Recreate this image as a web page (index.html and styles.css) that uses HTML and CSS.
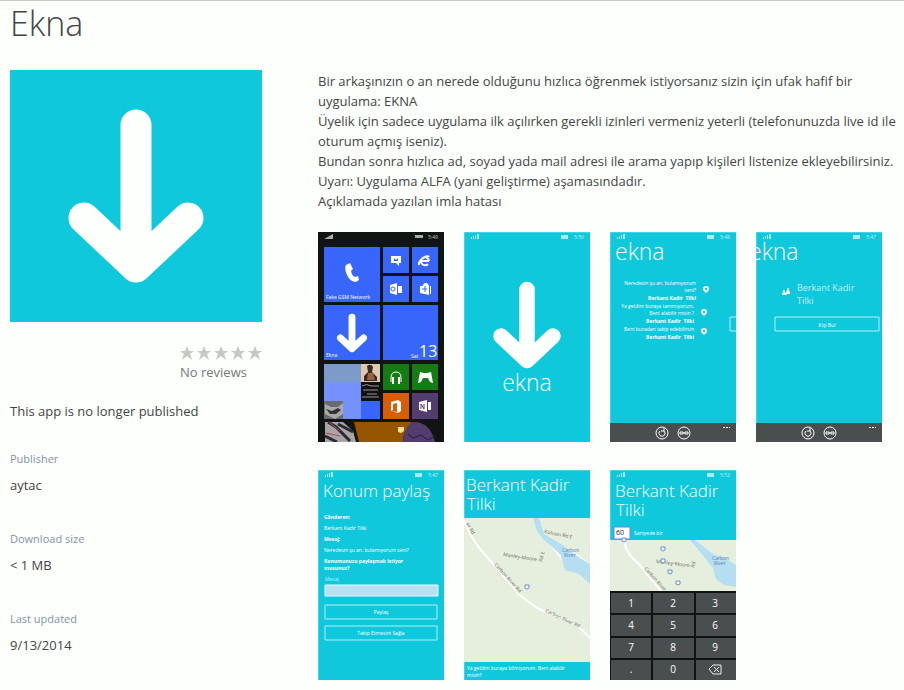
FILE: index.html
```html
<!DOCTYPE html>
<html lang="en">
<head>
<meta charset="utf-8">
<title>Ekna</title>
<meta name="viewport" content="width=device-width, initial-scale=1">
<link rel="stylesheet" href="styles.css">
</head>
<body>
<svg class="defs" aria-hidden="true">
  <symbol id="arrow" viewBox="0 0 252 252">
    <path d="M126 55V197M74 148L126 197L178 148" fill="none" stroke="#fdfffd" stroke-width="31" stroke-linecap="round" stroke-linejoin="round"/>
  </symbol>
  <symbol id="status" viewBox="0 0 126 8">
    <path d="M7 7V5h1V7zM9 7V4h1V7zM11 7V3h1V7zM13 7V2h2V7zM97 3h7v4h-7z" fill="#fff" opacity=".65"/>
  </symbol>
  <symbol id="star" viewBox="0 0 14 14">
    <path d="M7 0l2 5h5l-4 3 2 6-5-4-5 4 2-6-4-3h5z"/>
  </symbol>
  <symbol id="appbar" viewBox="0 0 126 19">
    <path d="M0 0h126v19H0z" fill="#4a4e4e"/>
    <g fill="none" stroke="#fff">
      <circle cx="52" cy="10" r="6"/><circle cx="74" cy="10" r="6"/>
      <path d="M50 8a3 3 0 1 0 4 0M54 5v3h-3"/>
      <path d="M70 9h3v2h-3zM75 9h3v2h-3zM73 10h2"/>
    </g>
    <path d="M113 4h2v1h-2zM116 4h2v1h-2zM119 4h1v1h-1z" fill="#fff"/>
  </symbol>
  <symbol id="pin" viewBox="0 0 8 8">
    <path d="M1 3a3 3 0 0 1 6 0q0 2-3 4Q1 5 1 3z" fill="#fff"/><path d="M3 2h2v2H3z" fill="#10c8dc"/>
  </symbol>
  <symbol id="marker" viewBox="0 0 6 6">
    <path d="M1 1h4v3L3 5 1 4z" fill="#fff" stroke="#5f92d2"/>
  </symbol>
</svg>

<header class="title"><h1>Ekna</h1></header>

<main class="page">
  <aside class="side">
    <svg class="logo" viewBox="0 0 252 252" role="img" aria-label="Ekna"><path d="M0 0h252v252H0z" fill="#10c8dc"/><use href="#arrow" width="252" height="252"/></svg>
    <div class="rating">
      <div class="stars">
        <svg><use href="#star"/></svg><svg><use href="#star"/></svg><svg><use href="#star"/></svg><svg><use href="#star"/></svg><svg><use href="#star"/></svg>
      </div>
      <p>No reviews</p>
    </div>
    <p class="notice">This app is no longer published</p>
    <dl class="facts">
      <div><dt>Publisher</dt><dd>aytac</dd></div>
      <div><dt>Download size</dt><dd>&lt; 1 MB</dd></div>
      <div><dt>Last updated</dt><dd>9/13/2014</dd></div>
    </dl>
  </aside>

  <section class="content">
    <div class="description">
      <p>Bir arkaşınızın o an nerede olduğunu hızlıca öğrenmek istiyorsanız sizin için ufak hafif bir uygulama: EKNA</p>
      <p>Üyelik için sadece uygulama ilk açılırken gerekli izinleri vermeniz yeterli (telefonunuzda live id ile oturum açmış iseniz).</p>
      <p>Bundan sonra hızlıca ad, soyad yada mail adresi ile arama yapıp kişileri listenize ekleyebilirsiniz.</p>
      <p>Uyarı: Uygulama ALFA (yani geliştirme) aşamasındadır.</p>
      <p>Açıklamada yazılan imla hatası</p>
    </div>

    <ul class="shots">
      <li><svg class="shot" viewBox="0 0 126 210">
        <path d="M0 0h126v210H0z" fill="#101413"/>
        <path d="M6 7h9V2zM97 3h8v3h-8z" fill="#aaa"/><text class="tiny" x="110" y="7">5:49</text>
        <path d="M6 15h56v55H6zM65 15h26v26H65zM94 15h26v26H94zM65 44h26v26H65zM94 44h26v26H94zM6 73h56v55H6zM65 73h55v55H65zM43 168h19v19H43z" fill="#3866fb"/>
        <path d="M6 132h37v18H6z" fill="#7c9bcb"/><path d="M6 150h37v37H6z" fill="#7591fc"/>
        <path d="M65 132h26v26H65zM94 132h26v26H94z" fill="#147c13"/>
        <path d="M65 161h26v26H65z" fill="#d95d04"/><path d="M94 161h26v26H94z" fill="#533d70"/>
        <path d="M28 33l4-2 3 6-2 2q1 5 4 6l3-1 1 4-3 2q-6 0-9-7-3-7-1-10z" fill="#fff"/>
        <text class="small" x="8" y="67">Fake GSM Network</text>
        <path d="M73 24h10v7h-2v3l-3-3h-5z" fill="#fff"/><path d="M76 26l2 2 2-2v3h-4z" fill="#3866fb"/>
        <path d="M111 29h-7M111 29a4 4 0 1 0-1 3M101 33q-1-3 4-7 5-3 6-1" fill="none" stroke="#fff" stroke-width="2"/>
        <path d="M72 53l7-2v12l-7-2zM80 54h4v7h-4z" fill="#fff"/><circle cx="75" cy="57" r="2" fill="none" stroke="#3866fb"/>
        <path d="M102 54l9-1v10l-9-2zM105 54q0-3 3-3t2 4M112 54h1v8h-1z" fill="#fff"/><path d="M104 57h5M107 54v6" stroke="#3866fb"/>
        <use href="#arrow" x="6" y="73" width="56" height="56"/>
        <text class="small" x="8" y="125">Ekna</text>
        <text class="small" x="93" y="126">Sat</text><text class="day" x="101" y="125">13</text>
        <path d="M43 132h19v18H43z" fill="#ddc9ab"/><path d="M49 134q4-3 6 1l-1 5 5 5v4H46v-5l4-4z" fill="#392a28"/><path d="M50 141h5l2 7h-8z" fill="#966344"/>
        <path d="M43 150h19v19H43z" fill="#111"/><path d="M44 154q5-3 9 0h8M45 158h15M49 162h10M44 165h17" fill="none" stroke="#969696"/>
        <path d="M6 169h19v18H6z" fill="#686c70"/><path d="M7 172l6 3h7l5-4v11l-8 5-10-5z" fill="#aaa"/><path d="M8 177l6 2 6-3 3 2-5 4H12z" fill="#333"/>
        <path d="M73 150v-4q0-6 5-6t5 6v4" fill="none" stroke="#fff"/><path d="M74 145h2v7h-2zM80 145h2v7h-2z" fill="#fff"/>
        <path d="M102 140l4 1h3l4-1 2 11-3-1-2-4h-5l-2 4-3 1z" fill="#fff"/>
        <path d="M73 170l7-2 3 2v9l-3 2-7-2 6 1v-9l-4 1v6l-2 1z" fill="#fff"/>
        <path d="M101 170l8-2v12l-8-2zM110 170h3v8h-3z" fill="#fff"/><path d="M103 177v-5l3 5v-5" fill="none" stroke="#533d70"/>
        <path d="M36 190h58q-9 9-9 20H41z" fill="#965500"/>
        <path d="M94 190q18-1 23 20H85q1-13 9-20z" fill="#533d70"/><path d="M7 190h18l10 9 3 11H7z" fill="#a9a4a8"/><path d="M10 190l8 5 14 14M7 204l12 6M20 192l15 8" fill="none" stroke="#292b35" stroke-width="3"/><path d="M11 190l11 9M8 201l14 3" stroke="#aa5145"/>
        <path d="M80 195h6v4l-3 2-3-1z" fill="#ffdb94"/><path d="M90 202l5 4 8-3 7 5 7-4" fill="none" stroke="#25202e"/>
      </svg></li>

      <li><svg class="shot" viewBox="0 0 126 210">
        <path class="cyan" d="M0 0h126v210H0z"/><path class="edge" d="M0 210V0h126"/>
        <use href="#status" width="126" height="8"/><text class="tiny" x="110" y="7">5:50</text>
        <use href="#arrow" y="30" width="126" height="126"/>
        <text class="name" x="63" y="159" text-anchor="middle">ekna</text>
      </svg></li>

      <li><svg class="shot" viewBox="0 0 126 210">
        <path class="cyan" d="M0 0h126v210H0z"/><path class="edge" d="M0 210V0h126"/>
        <use href="#status" width="126" height="8"/><text class="tiny" x="110" y="7">5:48</text>
        <text class="name" x="5" y="28">ekna</text>
        <g text-anchor="end">
          <text class="small" x="86" y="53">Neredesin şu an, bulamıyorum</text><text class="small" x="86" y="60">seni?</text><text class="small strong" x="86" y="68">Berkant Kadir &nbsp;Tilki</text>
          <text class="small" x="84" y="76">Ya geldim buraya tanımıyorum.</text><text class="small" x="84" y="83">Beni alabilir misin ?</text><text class="small strong" x="84" y="91">Berkant Kadir &nbsp;Tilki</text>
          <text class="small" x="84" y="99">Beni buradan takip edebilirsin</text><text class="small strong" x="84" y="107">Berkant Kadir &nbsp;Tilki</text>
        </g>
        <use href="#pin" x="92" y="54" width="8" height="8"/><use href="#pin" x="90" y="77" width="8" height="8"/><use href="#pin" x="90" y="96" width="8" height="8"/>
        <path class="outline" d="M127 85h-7v14h7"/>
        <use href="#appbar" y="191" width="126" height="19"/>
      </svg></li>

      <li><svg class="shot" viewBox="0 0 126 210">
        <path class="cyan" d="M0 0h126v210H0z"/><path class="edge" d="M0 210V0h126"/>
        <use href="#status" width="126" height="8"/><text class="tiny" x="110" y="7">5:47</text>
        <text class="name" x="-7" y="28">ekna</text>
        <path d="M26 63q0-3 2-3t3 3zM30 62q0-4 2-4t2 4z" fill="#fff"/><circle cx="28" cy="59" r="1" fill="#fff"/><circle cx="32" cy="57" r="1" fill="#fff"/>
        <text class="person" x="41" y="59">Berkant Kadir</text><text class="person" x="41" y="72">Tilki</text>
        <path class="outline" d="M19 85h104v14H19z"/><text class="small" x="71" y="95" text-anchor="middle">Kişi Bul</text>
        <use href="#appbar" y="191" width="126" height="19"/>
      </svg></li>

      <li><svg class="shot" viewBox="0 0 126 210">
        <path class="cyan" d="M0 0h126v210H0z"/><path class="edge" d="M0 210V0h126"/>
        <use href="#status" width="126" height="8"/><text class="tiny" x="110" y="7">5:47</text>
        <text class="heading" x="5" y="27">Konum paylaş</text>
        <text class="small strong" x="6" y="49">Gönderen:</text><text class="small" x="6" y="60">Berkant Kadir Tilki</text>
        <text class="small strong" x="6" y="71">Mesaj:</text><text class="small" x="6" y="82">Neredesin şu an, bulamıyorum seni?</text>
        <text class="small strong" x="6" y="93">Konumunuzu paylaşmak istiyor</text><text class="small strong" x="6" y="100">musunuz?</text>
        <text class="tiny" x="7" y="111">Mesaj</text>
        <path d="M7 115h113v11H7z" fill="#b8dff2" stroke="#e5fbfc"/>
        <path class="outline" d="M7 135h112v14H7zM7 156h112v14H7z"/>
        <g text-anchor="middle"><text class="small" x="63" y="144">Paylaş</text><text class="small" x="63" y="165">Takip Etmesini Sağla</text></g>
      </svg></li>

      <li><svg class="shot" viewBox="0 0 126 210">
        <path class="cyan" d="M0 0h126v210H0z"/><path class="edge" d="M0 210V0h126"/>
        <text class="heading" x="2" y="21">Berkant Kadir</text><text class="heading" x="3" y="40">Tilki</text>
        <path class="land" d="M0 48h126v144H0z"/>
        <path d="M76 64q12 10 21 24M98 77l16 9 12 9" fill="none" stroke="#fff" stroke-width="2"/>
        <path class="water" d="M69 48h6l5 16 17 10 19 14 10 6v20l-11-10-14-4-4-15-18-16-6-8z"/>
        <path class="road" d="M0 50q9 23 24 38l31 36q12 11 24 17l27 10q12 8 20 17"/>
        <g class="map">
          <text transform="translate(2 54) rotate(60)">er Rd</text><text transform="translate(30 95) rotate(48)">Carbon River Rd</text>
          <text transform="translate(80 63) rotate(12)">Kolusin Rd E</text><text transform="translate(39 86) rotate(9)">Manley-Moore</text><text transform="translate(78 92) rotate(-75)">Rd E</text>
          <text transform="translate(81 142) rotate(25)">Carbon River Rd</text>
          <text class="river" x="98" y="82">Carbon</text><text class="river" x="100" y="87">River</text>
        </g>
        <use href="#marker" x="60" y="114" width="6" height="6"/>
        <text class="small" x="3" y="200">Ya geldim buraya bilmiyorum. Beni alabilir</text><text class="small" x="3" y="207">misin?</text>
      </svg></li>

      <li><svg class="shot" viewBox="0 0 126 210">
        <path class="cyan" d="M0 0h126v70H0z"/><path class="edge" d="M0 70V0h126"/>
        <use href="#status" width="126" height="8"/><text class="tiny" x="110" y="7">5:52</text>
        <text class="heading" x="5" y="27">Berkant Kadir</text><text class="heading" x="6" y="46">Tilki</text>
        <path class="land" d="M0 70h126v51H0z"/>
        <path class="water" d="M80 70h5l18 14 12 4 11 7v22l-12-2-8-6-3-11-12-15z"/>
        <path class="road" d="M14 71q2 13 15 23l22 27"/>
        <g class="map"><text transform="translate(34 99) rotate(48)">Carbon River</text><text transform="translate(46 93) rotate(7)">Manley-Moore</text><text transform="translate(84 98) rotate(-75)">Rd</text><text class="river" x="102" y="90">Carbon</text><text class="river" x="104" y="95">River</text></g>
        <path d="M4 57h16v12H4z" fill="#fff" stroke="#737ff0"/><text class="value" x="6" y="65">60</text><text class="small" x="24" y="65">Saniyede bir</text>
        <use href="#marker" x="11" y="67" width="6" height="6"/><use href="#marker" x="50" y="76" width="6" height="6"/><use href="#marker" x="50" y="88" width="6" height="6"/><use href="#marker" x="57" y="99" width="6" height="6"/><use href="#marker" x="65" y="110" width="6" height="6"/>
        <path d="M0 121h126v89H0z" fill="#101413"/>
        <path d="M1 123h40v20H1zM43 123h41v20H43zM86 123h40v20H86zM1 145h40v21H1zM43 145h41v21H43zM86 145h40v21H86zM1 168h40v20H1zM43 168h41v20H43zM86 168h40v20H86zM1 190h40v20H1zM43 190h41v20H43zM86 190h40v20H86z" fill="#4a4e4e"/>
        <g class="keys" text-anchor="middle">
          <text x="21" y="137">1</text><text x="63" y="137">2</text><text x="105" y="137">3</text>
          <text x="21" y="159">4</text><text x="63" y="159">5</text><text x="105" y="159">6</text>
          <text x="21" y="181">7</text><text x="63" y="181">8</text><text x="105" y="181">9</text>
          <text x="21" y="203">.</text><text x="63" y="203">0</text>
        </g>
        <path d="M99 199l4-4h8v9h-8zM104 197l5 5M109 197l-5 5" fill="none" stroke="#eee"/>
      </svg></li>
    </ul>
  </section>
</main>
</body>
</html>
```
FILE: styles.css
```css
* { box-sizing: border-box; }

body {
  margin: 0;
  background: #fdfffd;
  border-top: 1px solid #cbc7c2;
  color: #444;
  font: 13px/20px "Open Sans", "Noto Sans", sans-serif;
}

h1, p, ul, dl, dd { margin: 0; padding: 0; }
svg { display: block; }
.defs { display: none; }

.title { padding: 0 10px; margin-bottom: 25px; }
.title h1 { font-size: 34px; line-height: 44px; font-weight: 300; }

.page {
  display: grid;
  grid-template-columns: 252px minmax(0, 1fr);
  gap: 56px;
  padding: 0 4px 8px 10px;
}

.logo { width: 100%; }

.rating {
  width: 82px;
  margin: 24px 0 0 auto;
  color: #777;
}
.stars { display: flex; justify-content: space-between; margin-bottom: 2px; }
.stars svg { width: 14px; height: 14px; fill: #c8c7c2; }

.notice { margin-top: 19px; }

.facts { margin-top: 28px; display: grid; gap: 34px; }
.facts dt { font-size: 11px; color: #8292a8; }
.facts dd { margin-top: 6px; }

.description { padding-top: 1px; }

.shots {
  display: flex;
  flex-wrap: wrap;
  gap: 28px 20px;
  margin-top: 21px;
  list-style: none;
}
.shot { width: 126px; height: 210px; overflow: hidden; fill: #fff; }

.cyan { fill: #10c8dc; }
.edge { fill: none; stroke: #7adfe9; }
.outline { fill: none; stroke: #b0eef3; }
.land { fill: #e6efdd; }
.water { fill: #b5dff0; }
.road { fill: none; stroke: #fff; stroke-width: 2px; }

.tiny { font-size: 5px; opacity: 0.7; }
.small { font-size: 5px; }
.strong { font-weight: 700; }
.name { font-size: 23px; font-weight: 300; }
.heading { font-size: 17px; font-weight: 300; }
.person { font-size: 9px; font-weight: 400; opacity: 0.7; }
.day { font-size: 16px; }
.value { font-size: 7px; fill: #222; }
.map { font-size: 5px; fill: #666; }
.river { fill: #5b83bd; }
.keys { font-size: 10px; }
```
